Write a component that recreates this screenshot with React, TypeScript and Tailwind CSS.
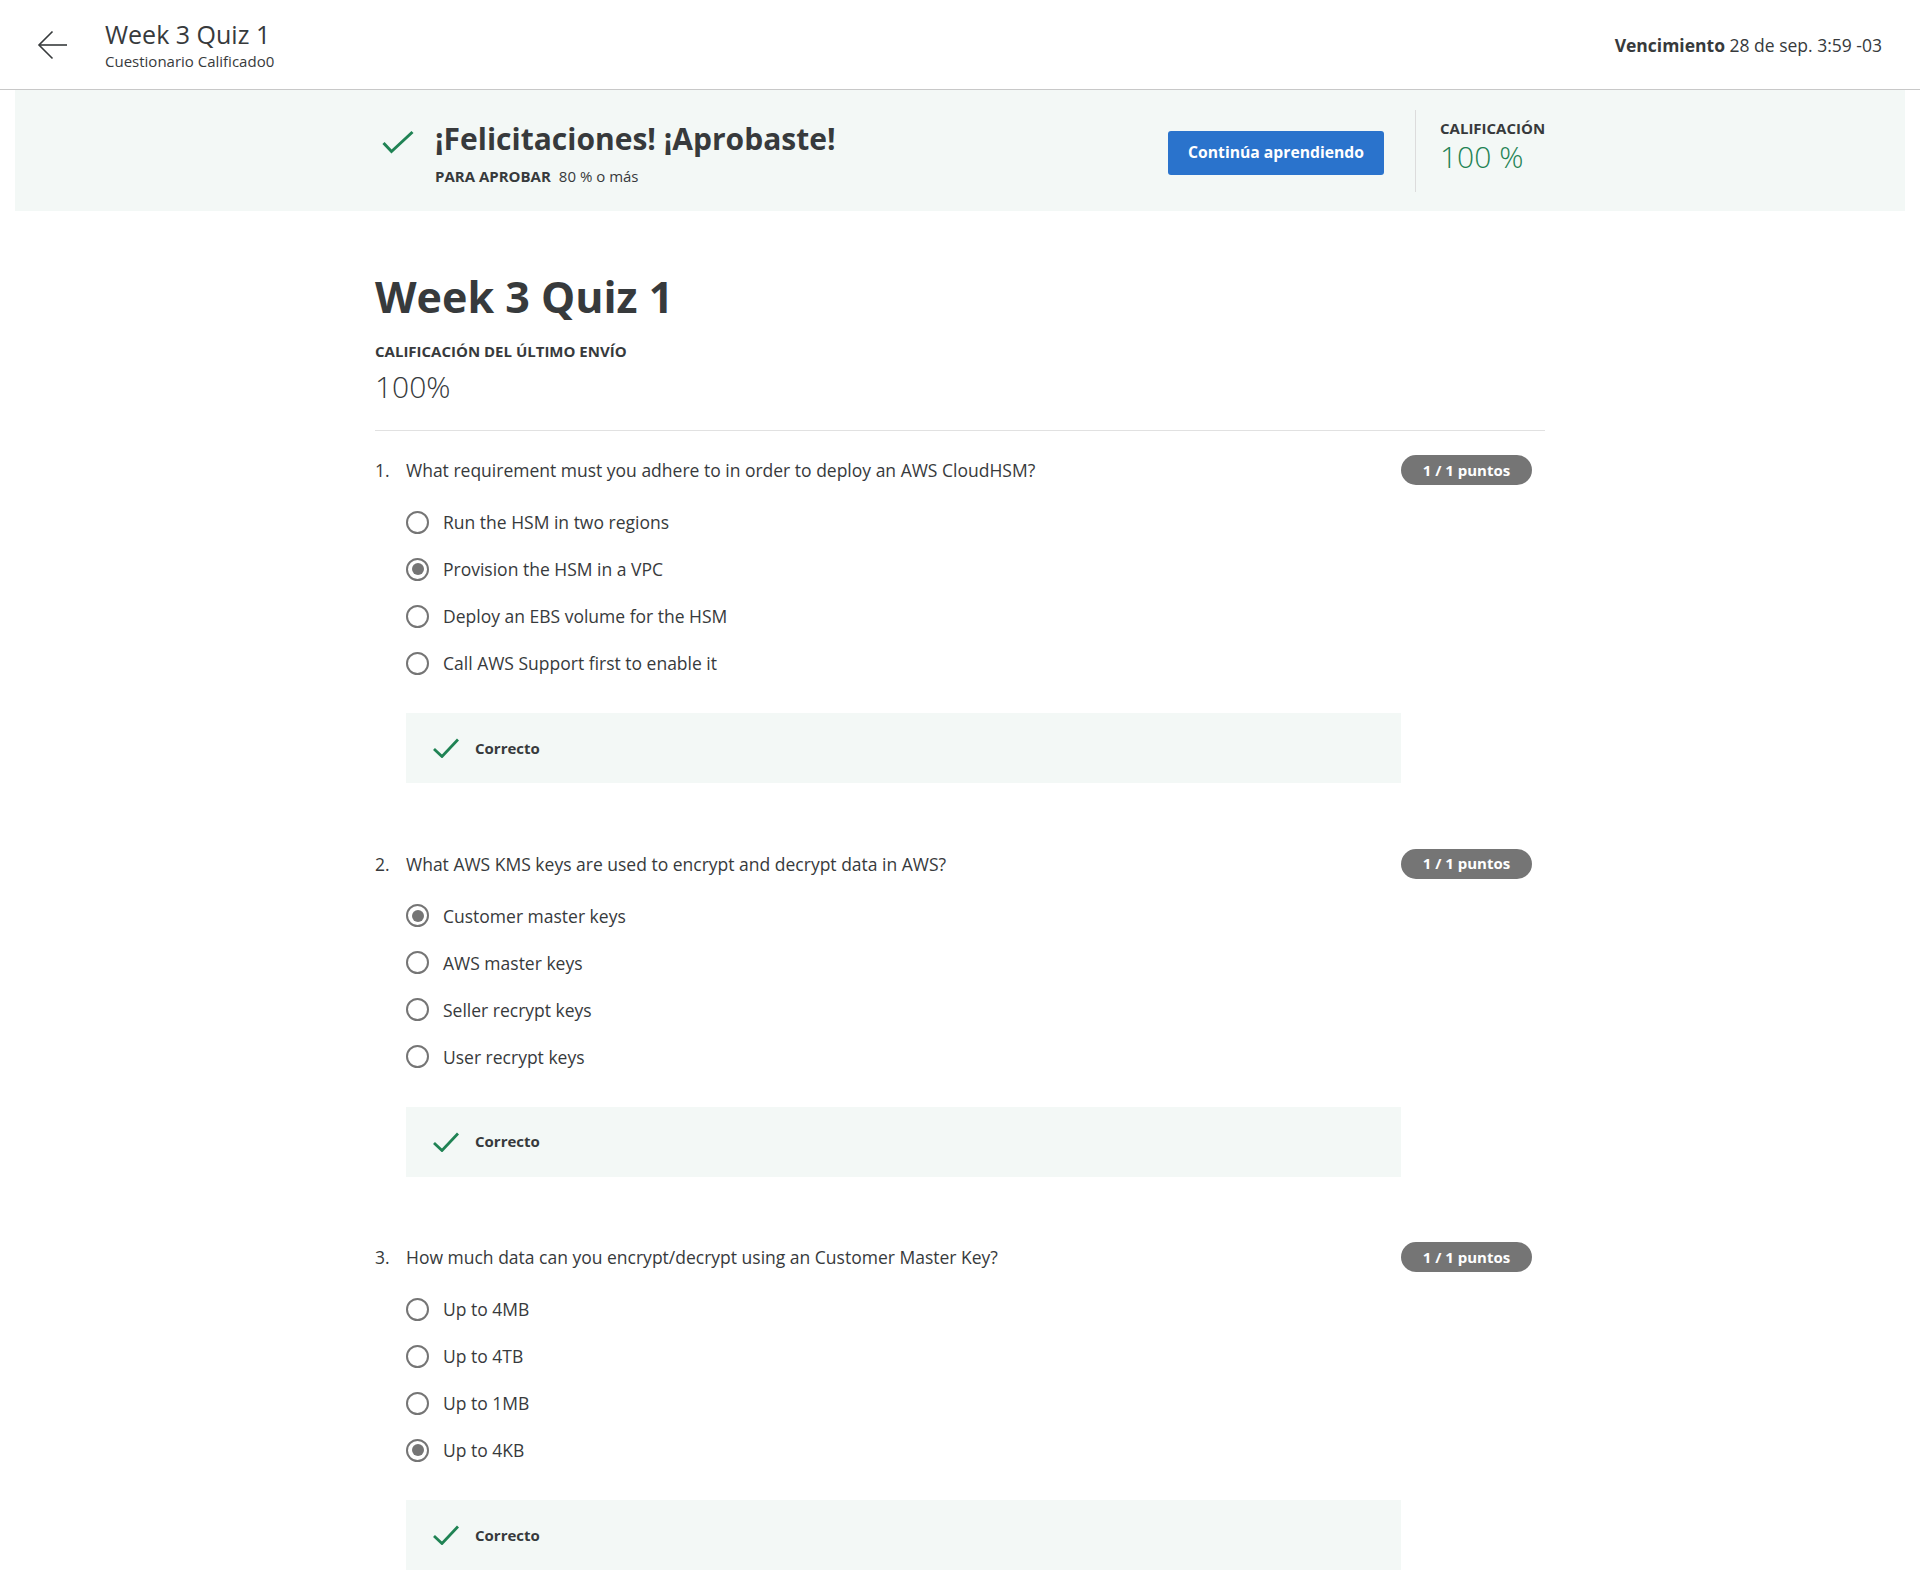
import React from "react"

type Question = {
    n: number
    text: string
    options: string[]
    picked: number
}

const questions: Question[] = [
    {
        n: 1,
        text: "What requirement must you adhere to in order to deploy an AWS CloudHSM?",
        options: [
            "Run the HSM in two regions",
            "Provision the HSM in a VPC",
            "Deploy an EBS volume for the HSM",
            "Call AWS Support first to enable it",
        ],
        picked: 1,
    },
    {
        n: 2,
        text: "What AWS KMS keys are used to encrypt and decrypt data in AWS?",
        options: ["Customer master keys", "AWS master keys", "Seller recrypt keys", "User recrypt keys"],
        picked: 0,
    },
    {
        n: 3,
        text: "How much data can you encrypt/decrypt using an Customer Master Key?",
        options: ["Up to 4MB", "Up to 4TB", "Up to 1MB", "Up to 4KB"],
        picked: 3,
    },
]

const BackArrow = () => (
    <svg width="30" height="30" viewBox="0 0 30 30" fill="none" stroke="#373a3c" strokeWidth="1.6">
        <path d="M30 15H2" />
        <path d="M15.5 1.5L2 15l13.5 13.5" />
    </svg>
)

const Radio = ({ on }: { on: boolean }) => (
    <span className="w-[23px] h-[23px] rounded-full border-2 border-[#757575] flex items-center justify-center shrink-0">
        {on && <span className="w-[12px] h-[12px] rounded-full bg-[#757575]" />}
    </span>
)

const QuestionBlock = ({ q }: { q: Question }) => (
    <div className="flex">
        <div className="w-[31px] mt-[3px] text-[17.5px] leading-[24px] text-[#373a3c]">{q.n}.</div>
        <div className="flex-1">
            <p className="mt-[3px] text-[17.5px] leading-[24px] text-[#373a3c]">{q.text}</p>
            <div className="mt-[28px] flex flex-col gap-[23px]">
                {q.options.map((o, i) => (
                    <div key={o} className="flex items-center h-[24px] gap-[14px]">
                        <Radio on={i === q.picked} />
                        <span className="text-[17.5px] leading-[24px] text-[#373a3c]">{o}</span>
                    </div>
                ))}
            </div>
            <div className="mt-[38px] h-[70px] bg-[#f3f8f6] flex items-center pl-[27px] gap-[16px]">
                <svg width="26" height="20" viewBox="0 0 26 20" fill="none" stroke="#1f8354" strokeWidth="2.8">
                    <path d="M1 11l8 7.5L25 1.5" />
                </svg>
                <span className="text-[15px] font-bold text-[#373a3c]">Correcto</span>
            </div>
        </div>
        <div className="w-[144px]">
            <span className="inline-flex items-center justify-center h-[30px] w-[131px] rounded-full bg-[#757575] text-white text-[15px] font-bold">
                1 / 1 puntos
            </span>
        </div>
    </div>
)

export default function App() {
    return (
        <div className="min-h-[1586px] bg-white font-['Open_Sans',sans-serif] text-[#373a3c]">
            <header className="h-[90px] border-b border-[#c8c8c8] flex items-center justify-between pl-[37px] pr-[38px]">
                <div className="flex items-center gap-[38px]">
                    <BackArrow />
                    <div>
                        <div className="text-[25px] leading-[30px]">Week 3 Quiz 1</div>
                        <div className="mt-[2px] text-[15px] leading-[20px]">Cuestionario Calificado0</div>
                    </div>
                </div>
                <div className="mt-[1px] text-[17.5px]">
                    <span className="font-bold">Vencimiento</span> 28 de sep. 3:59 -03
                </div>
            </header>

            <section className="mx-[15px] h-[121px] bg-[#f3f8f6]">
                <div className="max-w-[1170px] mx-auto flex items-start">
                    <svg className="mt-[40px] ml-[7px]" width="32" height="24" viewBox="0 0 32 24" fill="none" stroke="#1f8354" strokeWidth="3">
                        <path d="M1.5 13l8 8.5L30.5 2" />
                    </svg>
                    <div className="mt-[31px] ml-[21px]">
                        <h2 className="text-[30px] leading-[36px] font-bold">¡Felicitaciones! ¡Aprobaste!</h2>
                        <div className="mt-[9px] text-[15px] leading-[20px]">
                            <span className="font-bold">PARA APROBAR</span>
                            <span className="ml-2">80 % o más</span>
                        </div>
                    </div>
                    <div className="flex-1" />
                    <button className="mt-[41px] h-[44px] w-[216px] rounded-[3px] bg-[#2a73cc] text-white text-[15.7px] font-bold">
                        Continúa aprendiendo
                    </button>
                    <div className="mt-[20px] ml-[31px] h-[82px] w-px bg-[#dcdcdc]" />
                    <div className="mt-[29px] ml-[24px] w-[105px]">
                        <div className="text-[15px] leading-[18px] font-bold">CALIFICACIÓN</div>
                        <div className="text-[30px] leading-[40px] font-light text-[#1f8354]">100 %</div>
                    </div>
                </div>
            </section>

            <main className="max-w-[1170px] mx-auto">
                <h1 className="mt-[61px] text-[43px] leading-[50px] font-bold">Week 3 Quiz 1</h1>
                <div className="mt-[19px] text-[15px] leading-[20px] font-bold">CALIFICACIÓN DEL ÚLTIMO ENVÍO</div>
                <div className="mt-[8px] text-[30px] leading-[36px] font-light">100%</div>
                <div className="mt-[25px] h-px bg-[#e1e1e1]" />
                <div className="mt-[24px] flex flex-col gap-[65.5px]">
                    {questions.map((q) => (
                        <QuestionBlock key={q.n} q={q} />
                    ))}
                </div>
            </main>
        </div>
    )
}
